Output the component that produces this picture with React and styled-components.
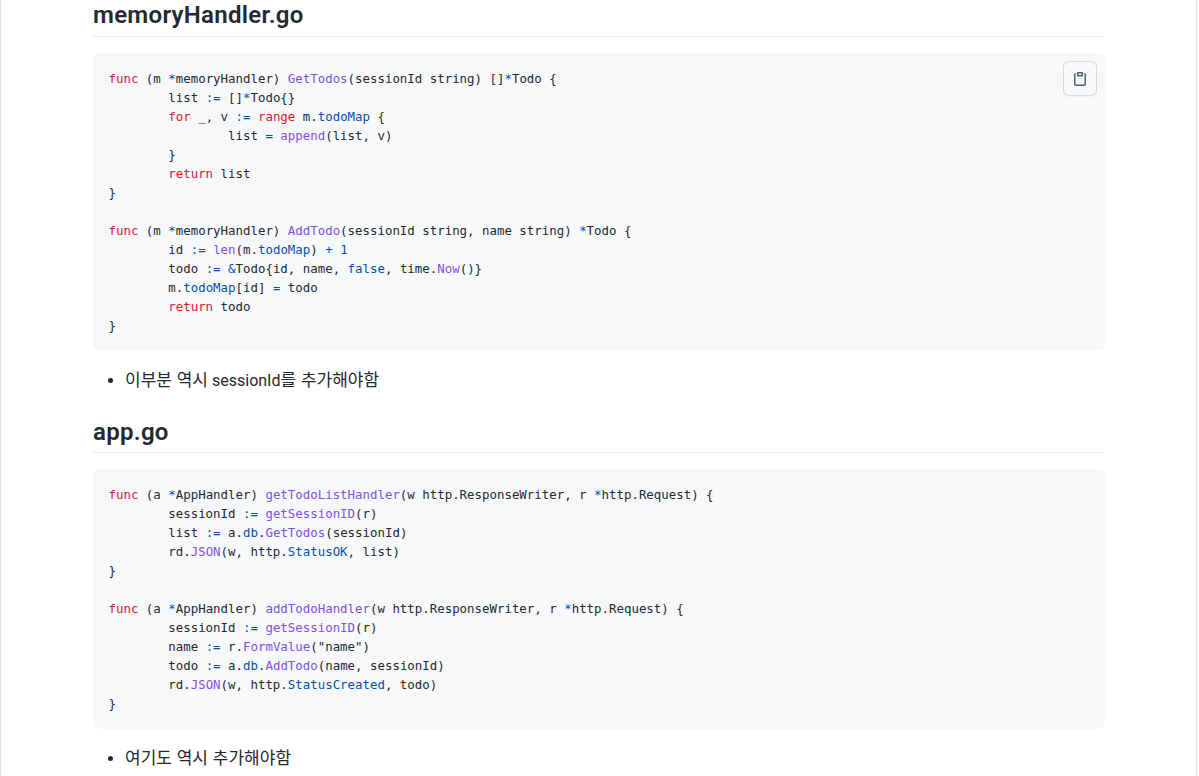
import React from 'react';
import styled, { createGlobalStyle } from 'styled-components';

const GlobalStyle = createGlobalStyle`
  html, body {
    margin: 0;
    height: 776px;
    overflow: hidden;
    background: #fff;
  }
`;

const Article = styled.article`
  box-sizing: border-box;
  width: 1197px;
  height: 776px;
  padding: 0 91px 0 92px;
  border-left: 1px solid #e1e4e8;
  border-right: 1px solid #e1e4e8;
  overflow: hidden;
  color: #24292f;
  font-family: Roboto, "Noto Sans CJK KR", sans-serif;
  font-size: 16px;
  line-height: 24px;
`;

const Heading = styled.h2`
  margin: 24px 0 16px;
  padding-bottom: 4.5px;
  border-bottom: 1px solid #eaecef;
  font-size: 24px;
  font-weight: 600;
  letter-spacing: 0.3px;
  line-height: 30px;

  &:first-child {
    margin-top: 0;
    padding-bottom: 6.2px;
  }
`;

const CodeBlock = styled.div`
  position: relative;
  margin-bottom: 16px;
  background: #f6f8fa;
  border-radius: 6px;
`;

const Pre = styled.pre`
  margin: 0;
  padding: 16px 16px 16px 15.5px;
  font-family: "DejaVu Sans Mono", monospace;
  font-size: 12.42px;
  line-height: 19px;
  tab-size: 8;
  color: #24292f;
`;

const tokenColors = { k: '#cf222e', f: '#8250df', c: '#0550ae' };

const Token = styled.span`
  color: ${props => tokenColors[props.$kind]};
`;

const CopyButton = styled.button`
  position: absolute;
  top: 8px;
  right: 8px;
  width: 34px;
  height: 35px;
  padding: 0;
  display: flex;
  align-items: center;
  justify-content: center;
  background: #f6f8fa;
  border: 1px solid rgba(31, 35, 40, 0.15);
  border-radius: 6px;
  box-shadow: 0 1px 0 rgba(31, 35, 40, 0.04);
  color: #57606a;
`;

const List = styled.ul`
  margin: 0 0 16px;
  padding-left: 32px;
`;

const Hangul = styled.span`
  font-family: "Noto Sans CJK KR", sans-serif;
  font-size: 17px;
  word-spacing: 1px;
`;

const memoryCode = [
  '~k:func~ (m ~c:*~memoryHandler) ~f:GetTodos~(sessionId string) []~c:*~Todo {',
  '\tlist ~c::=~ []~c:*~Todo{}',
  '\t~k:for~ _, v ~c::=~ ~k:range~ m.~c:todoMap~ {',
  '\t\tlist ~c:=~ ~f:append~(list, v)',
  '\t}',
  '\t~k:return~ list',
  '}',
  '',
  '~k:func~ (m ~c:*~memoryHandler) ~f:AddTodo~(sessionId string, name string) ~c:*~Todo {',
  '\tid ~c::=~ ~f:len~(m.~c:todoMap~) ~c:+~ ~c:1~',
  '\ttodo ~c::=~ ~c:&~Todo{id, name, ~c:false~, time.~f:Now~()}',
  '\tm.~c:todoMap~[id] ~c:=~ todo',
  '\t~k:return~ todo',
  '}',
];

const appCode = [
  '~k:func~ (a ~c:*~AppHandler) ~f:getTodoListHandler~(w http.ResponseWriter, r ~c:*~http.Request) {',
  '\tsessionId ~c::=~ ~f:getSessionID~(r)',
  '\tlist ~c::=~ a.~c:db~.~f:GetTodos~(sessionId)',
  '\trd.~f:JSON~(w, http.~c:StatusOK~, list)',
  '}',
  '',
  '~k:func~ (a ~c:*~AppHandler) ~f:addTodoHandler~(w http.ResponseWriter, r ~c:*~http.Request) {',
  '\tsessionId ~c::=~ ~f:getSessionID~(r)',
  '\tname ~c::=~ r.~f:FormValue~("name")',
  '\ttodo ~c::=~ a.~c:db~.~f:AddTodo~(name, sessionId)',
  '\trd.~f:JSON~(w, http.~c:StatusCreated~, todo)',
  '}',
];

// odd parts of the split are the highlighted tokens, written as kind:text
const renderLine = line =>
  line.split('~').map((part, i) =>
    i % 2 ? <Token key={i} $kind={part[0]}>{part.slice(2)}</Token> : part
  );

const PasteIcon = () => (
  <svg width="16" height="16" viewBox="0 0 16 16" fill="currentColor">
    <path d="M5.75 1a.75.75 0 00-.75.75v3c0 .414.336.75.75.75h4.5a.75.75 0 00.75-.75v-3a.75.75 0 00-.75-.75h-4.5zm.75 3V2.5h3V4h-3zm-2.874-.467a.75.75 0 00-.752-1.298A1.75 1.75 0 002 3.75v9.5c0 .966.784 1.75 1.75 1.75h8.5A1.75 1.75 0 0014 13.25v-9.5a1.75 1.75 0 00-.874-1.515.75.75 0 10-.752 1.298.25.25 0 01.126.217v9.5a.25.25 0 01-.25.25h-8.5a.25.25 0 01-.25-.25v-9.5a.25.25 0 01.126-.217z" />
  </svg>
);

const Code = ({ lines, copy }) => (
  <CodeBlock>
    <Pre>
      {lines.map((line, i) => (
        <React.Fragment key={i}>
          {renderLine(line)}
          {'\n'}
        </React.Fragment>
      ))}
    </Pre>
    {copy && (
      <CopyButton aria-label="Copy">
        <PasteIcon />
      </CopyButton>
    )}
  </CodeBlock>
);

export default function App() {
  return (
    <>
      <GlobalStyle />
      <Article>
        <Heading>memoryHandler.go</Heading>
        <Code lines={memoryCode} copy />
        <List>
          <li><Hangul>이부분 역시</Hangul> sessionId<Hangul>를 추가해야함</Hangul></li>
        </List>
        <Heading>app.go</Heading>
        <Code lines={appCode} />
        <List>
          <li><Hangul>여기도 역시 추가해야함</Hangul></li>
        </List>
      </Article>
    </>
  );
}
